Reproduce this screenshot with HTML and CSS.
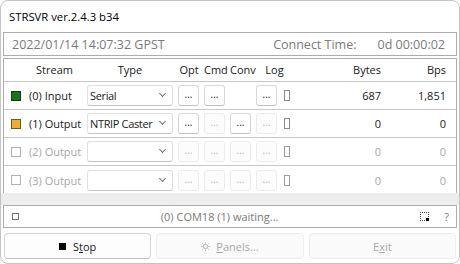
FILE: index.html
```html
<!DOCTYPE html>
<html>
<head>
<meta charset="utf-8">
<link rel="stylesheet" href="styles.css">
</head>
<body>
<div class="window">
  <div class="titlebar">STRSVR ver.2.4.3 b34</div>
  <div class="timebar">
    <span class="time">2022/01/14 14:07:32 GPST</span>
    <span class="ctlabel">Connect Time:</span>
    <span class="ctval">0d 00:00:02</span>
  </div>
  <div class="panel">
    <div class="row head">
      <span class="h-stream">Stream</span>
      <span class="h-type">Type</span>
      <span class="h-btn">Opt</span>
      <span class="h-btn">Cmd</span>
      <span class="h-btn">Conv</span>
      <span class="h-log">Log</span>
      <span class="h-bytes">Bytes</span>
      <span class="h-bps">Bps</span>
    </div>
    <div class="row">
      <span class="chk green"></span>
      <span class="lbl">(0) Input</span>
      <span class="combo">Serial<i class="chev"></i></span>
      <span class="btn">...</span>
      <span class="btn">...</span>
      <span class="nobtn"></span>
      <span class="btn">...</span>
      <span class="mini"></span>
      <span class="num">687</span>
      <span class="num">1,851</span>
    </div>
    <div class="row">
      <span class="chk orange"></span>
      <span class="lbl">(1) Output</span>
      <span class="combo">NTRIP Caster<i class="chev"></i></span>
      <span class="btn">...</span>
      <span class="btn dis">...</span>
      <span class="btn">...</span>
      <span class="btn dis">...</span>
      <span class="mini"></span>
      <span class="num">0</span>
      <span class="num">0</span>
    </div>
    <div class="row off">
      <span class="chk"></span>
      <span class="lbl">(2) Output</span>
      <span class="combo"><i class="chev"></i></span>
      <span class="btn dis">...</span>
      <span class="btn dis">...</span>
      <span class="btn dis">...</span>
      <span class="btn dis">...</span>
      <span class="mini"></span>
      <span class="num">0</span>
      <span class="num">0</span>
    </div>
    <div class="row off last">
      <span class="chk"></span>
      <span class="lbl">(3) Output</span>
      <span class="combo"><i class="chev"></i></span>
      <span class="btn dis">...</span>
      <span class="btn dis">...</span>
      <span class="btn dis">...</span>
      <span class="btn dis">...</span>
      <span class="mini"></span>
      <span class="num">0</span>
      <span class="num">0</span>
    </div>
  </div>
  <div class="splitter"></div>
  <div class="status">
    <span class="sq"></span>
    <span class="msg">(0) COM18 (1) waiting...</span>
    <span class="dotsq"><i></i></span>
    <span class="help">?</span>
  </div>
  <div class="buttons">
    <div class="bigbtn"><span class="stopicon"></span>S<u>t</u>op</div>
    <div class="bigbtn dis">
      <svg class="gear" width="9" height="9" viewBox="0 0 9 9"><circle cx="4.5" cy="4.5" r="2.2" fill="none" stroke="#b8b8b8" stroke-width="1"/><path d="M4.5 0v1.5M4.5 7.5V9M0 4.5h1.5M7.5 4.5H9M1.3 1.3l1 1M6.7 6.7l1 1M1.3 7.7l1-1M6.7 2.3l1-1" stroke="#b8b8b8" stroke-width="1"/></svg>
      <span class="ovl"><u>P</u>anels...</span>
    </div>
    <div class="bigbtn dis">E<u>x</u>it</div>
  </div>
</div>
</body>
</html>
```
FILE: styles.css
```css
* { box-sizing: border-box; }
html, body { margin: 0; padding: 0; background: #ffffff; }
body {
  font-family: "Open Sans", "Noto Sans", sans-serif;
  font-size: 11px;
  color: #1a1a1a;
}
.window {
  width: 460px;
  height: 264px;
  border: 1px solid #c4c4c4;
  border-radius: 8px;
  background: #ffffff;
  display: flex;
  flex-direction: column;
  padding: 0 2px;
  overflow: hidden;
}
.titlebar {
  height: 31px;
  line-height: 32px;
  padding-left: 6px;
  font-size: 11.3px;
  color: #000;
}
.timebar {
  height: 24px;
  border: 1px solid #adadad;
  display: flex;
  align-items: center;
  font-size: 12.5px;
  color: #7a7a7a;
  padding-left: 8px;
}
.time { flex: 1; }
.ctlabel { margin-right: 21px; }
.ctval { margin-right: 11px; }
.panel {
  margin-top: 2px;
  border: 1px solid #adadad;
  border-bottom: none;
  height: 135px;
}
.row {
  display: grid;
  grid-template-columns: 18px 58px 91px 26px 26px 26px 29px 6px 90px 65px;
  align-items: center;
  padding-left: 7px;
  height: 28px;
  border-bottom: 1px solid #c8c8c8;
}
.row.last { border-bottom: none; }
.row.head { height: 23px; padding-bottom: 2px; }
.h-stream { grid-column: 1 / 3; text-align: center; padding-left: 11px; }
.h-type { text-align: center; padding-right: 5px; }
.h-btn { text-align: center; padding-right: 4px; }
.h-log { grid-column: 7 / 9; text-align: center; padding-left: 2px; }
.h-bytes, .h-bps { text-align: right; }
.chk {
  width: 10px; height: 10px;
  border: 1px solid #8a8a8a;
  background: #fff;
}
.chk.green { background: #117a11; border-color: #2b2b2b; }
.chk.orange { background: #f2ac2a; border-color: #6a5a30; }
.off .chk { border-color: #b0b0b0; }
.off .lbl { color: #a8a8a8; }
.off .num { color: #a8a8a8; }
.lbl { white-space: nowrap; }
.combo {
  position: relative;
  width: 86px;
  height: 21px;
  border: 1px solid #e0e0e0;
  border-bottom-color: #c4c4c4;
  border-radius: 3px;
  background: #fff;
  line-height: 19px;
  padding-left: 2px;
  white-space: nowrap;
  overflow: hidden;
  letter-spacing: -0.35px;
}
.chev {
  position: absolute;
  right: 7px; top: 5px;
  width: 5px; height: 5px;
  border-right: 1px solid #707070;
  border-bottom: 1px solid #707070;
  transform: rotate(45deg);
}
.btn {
  width: 21px; height: 21px;
  border: 1px solid #d8d8d8;
  border-bottom-color: #c0c0c0;
  border-radius: 3px;
  background: #fff;
  text-align: center;
  line-height: 16px;
  font-size: 10px;
  color: #222;
}
.btn.dis {
  border-color: #ececec;
  background: #fcfcfc;
  color: #b8b8b8;
}
.mini {
  width: 6px; height: 11px;
  border: 1px solid #8a8a8a;
  margin-left: -1px;
}
.off .mini { border-color: #9a9a9a; }
.num { text-align: right; }
.splitter {
  height: 12px;
  background: #ededed;
  margin: 0 -2px;
}
.status {
  margin-top: 0;
  height: 23px;
  border: 1px solid #adadad;
  display: flex;
  align-items: center;
  padding-left: 8px;
  color: #7a7a7a;
}
.sq {
  width: 7px; height: 7px;
  border: 1px solid #707070;
}
.msg { flex: 1; text-align: center; padding-left: 0; }
.dotsq {
  position: relative;
  width: 9px; height: 9px;
  border: 1px dotted #505050;
  margin-right: 15px;
}
.dotsq i {
  position: absolute;
  right: -1px; bottom: -1px;
  width: 3px; height: 3px;
  background: #000;
}
.help { margin-right: 7px; color: #7a7a7a; }
.buttons {
  display: flex;
  gap: 5px;
  padding: 5px 1px 0 1px;
}
.bigbtn {
  flex: 1;
  height: 26px;
  border: 1px solid #d4d4d4;
  border-bottom-color: #c0c0c0;
  border-radius: 4px;
  background: #fdfdfd;
  display: flex;
  align-items: center;
  justify-content: center;
  font-size: 11px;
  color: #1a1a1a;
}
.bigbtn.dis {
  border-color: #ededed;
  background: #fafafa;
  color: #a8a8a8;
}
.stopicon {
  width: 7px; height: 7px;
  background: #000;
  margin-right: 7px;
}
.gear { margin-right: 6px; }
```
